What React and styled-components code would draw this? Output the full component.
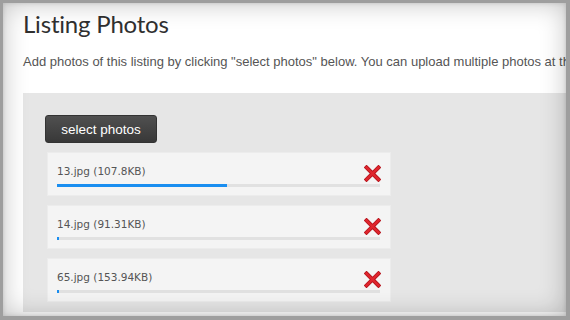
import React from 'react';
import styled, { createGlobalStyle } from 'styled-components';

const GlobalStyle = createGlobalStyle`
  html, body {
    margin: 0;
    padding: 0;
    background: #9e9e9e;
  }
`;

const Frame = styled.div`
  position: relative;
  box-sizing: border-box;
  width: 570px;
  height: 320px;
  overflow: hidden;
  border-style: solid;
  border-color: #9e9e9e;
  border-width: 3px 4px 4px 3px;
  background: #fff;
  font-family: Arial, "Liberation Sans", sans-serif;

  &::after {
    content: '';
    position: absolute;
    inset: 0;
    pointer-events: none;
    box-shadow: inset 0 0 26px rgba(0, 0, 0, 0.24), inset 0 0 4px rgba(0, 0, 0, 0.15);
  }
`;

const Title = styled.h1`
  margin: 0;
  padding: 5px 0 0 20px;
  font-family: Lato, "Open Sans", sans-serif;
  font-weight: 400;
  font-size: 24px;
  line-height: 32px;
  color: #303030;
  letter-spacing: -0.2px;
`;

const Intro = styled.p`
  margin: 14px 0 0 20px;
  font-size: 13px;
  line-height: 16px;
  color: #555;
  white-space: nowrap;
`;

const Panel = styled.div`
  margin: 23px 0 0 20px;
  padding: 22px 0 10px 22px;
  background: #e6e6e6;
  display: flex;
  flex-direction: column;
  align-items: flex-start;
`;

const SelectButton = styled.button`
  width: 112px;
  height: 28px;
  border: 1px solid #333;
  border-radius: 3px;
  background: linear-gradient(#505050, #383838);
  color: #fff;
  font-family: Arial, "Liberation Sans", sans-serif;
  font-size: 13.5px;
  padding: 0;
  margin-bottom: 9px;
`;

const FileList = styled.div`
  display: flex;
  flex-direction: column;
  gap: 9px;
  margin-left: 2px;
`;

const FileRow = styled.div`
  box-sizing: border-box;
  width: 344px;
  height: 44px;
  padding: 8px 10px 0 9px;
  background: #f4f4f4;
  border: 1px solid #ececec;
  display: flex;
  flex-direction: column;
`;

const FileTop = styled.div`
  display: flex;
  align-items: center;
  justify-content: space-between;
  height: 20px;
`;

const FileName = styled.span`
  font-family: "DejaVu Sans", Verdana, sans-serif;
  font-size: 10.5px;
  color: #555;
`;

const RemoveIcon = styled.svg`
  width: 17px;
  height: 17px;
  margin-right: -1px;
  margin-top: 5px;
`;

const Track = styled.div`
  margin-top: 3px;
  height: 3px;
  background: #e1e1e1;
`;

const Fill = styled.div`
  height: 100%;
  background: #1a8ef0;
`;

const files = [
  { name: '13.jpg (107.8KB)', progress: 52.5 },
  { name: '14.jpg (91.31KB)', progress: 0.7 },
  { name: '65.jpg (153.94KB)', progress: 0.7 },
];

function FileItem({ name, progress }) {
  return (
    <FileRow>
      <FileTop>
        <FileName>{name}</FileName>
        <RemoveIcon viewBox="0 0 17 17">
          <path d="M2.5 2.5 L14.5 14.5 M14.5 2.5 L2.5 14.5" stroke="#b5141c" strokeWidth="4" strokeLinecap="square" />
          <path d="M2.5 2.5 L14.5 14.5 M14.5 2.5 L2.5 14.5" stroke="#e0262e" strokeWidth="2.4" strokeLinecap="square" />
        </RemoveIcon>
      </FileTop>
      <Track>
        <Fill style={{ width: `${progress}%` }} />
      </Track>
    </FileRow>
  );
}

export default function App() {
  return (
    <>
      <GlobalStyle />
      <Frame>
        <Title>Listing Photos</Title>
        <Intro>
          Add photos of this listing by clicking "select photos" below. You can upload multiple photos at the same time.
        </Intro>
        <Panel>
          <SelectButton>select photos</SelectButton>
          <FileList>
            {files.map((f) => (
              <FileItem key={f.name} {...f} />
            ))}
          </FileList>
        </Panel>
      </Frame>
    </>
  );
}
